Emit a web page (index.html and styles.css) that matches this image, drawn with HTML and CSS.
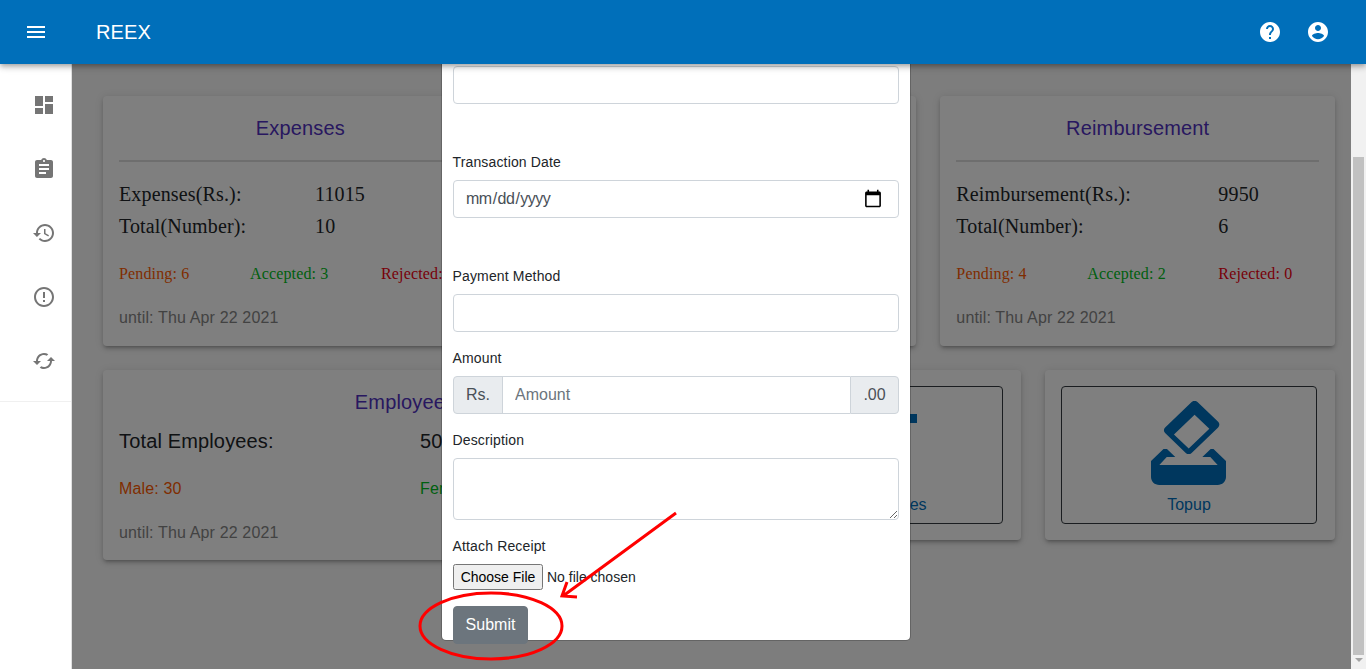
FILE: index.html
```html
<!DOCTYPE html>
<html lang="en">
  <head>
    <meta charset="UTF-8" />
    <meta name="viewport" content="width=device-width, initial-scale=1.0" />
    <title>REEX</title>
    <link rel="stylesheet" href="styles.css">
  </head>
  <body>
    <div class="app">
      <header class="topbar">
        <svg class="icon menu-icon" viewBox="0 0 24 24"><path d="M3 18h18v-2H3v2zm0-5h18v-2H3v2zm0-7v2h18V6H3z"/></svg>
        <div class="brand">REEX</div>
        <svg class="icon help-icon" viewBox="0 0 24 24"><path d="M12 2C6.48 2 2 6.48 2 12s4.48 10 10 10 10-4.48 10-10S17.52 2 12 2zm1 17h-2v-2h2v2zm2.07-7.75l-.9.92C13.45 12.9 13 13.5 13 15h-2v-.5c0-1.1.45-2.1 1.17-2.83l1.24-1.26c.37-.36.59-.86.59-1.41 0-1.1-.9-2-2-2s-2 .9-2 2H8c0-2.21 1.79-4 4-4s4 1.79 4 4c0 .88-.36 1.68-.93 2.25z"/></svg>
        <svg class="icon" viewBox="0 0 24 24"><path d="M12 2C6.48 2 2 6.48 2 12s4.48 10 10 10 10-4.48 10-10S17.52 2 12 2zm0 3c1.66 0 3 1.34 3 3s-1.34 3-3 3-3-1.34-3-3 1.34-3 3-3zm0 14.2c-2.5 0-4.71-1.28-6-3.22.03-1.99 4-3.08 6-3.08 1.99 0 5.97 1.09 6 3.08-1.29 1.94-3.5 3.22-6 3.22z"/></svg>
      </header>

      <div class="body-row">
        <nav class="sidebar">
          <div class="nav-list">
            <div class="nav-item"><svg class="icon" viewBox="0 0 24 24"><path d="M3 13h8V3H3v10zm0 8h8v-6H3v6zm10 0h8V11h-8v10zm0-18v6h8V3h-8z"/></svg></div>
            <div class="nav-item"><svg class="icon" viewBox="0 0 24 24"><path d="M19 3h-4.18C14.4 1.84 13.3 1 12 1c-1.3 0-2.4.84-2.82 2H5c-1.1 0-2 .9-2 2v14c0 1.1.9 2 2 2h14c1.1 0 2-.9 2-2V5c0-1.1-.9-2-2-2zm-7 0c.55 0 1 .45 1 1s-.45 1-1 1-1-.45-1-1 .45-1 1-1zm2 14H7v-2h7v2zm3-4H7v-2h10v2zm0-4H7V7h10v2z"/></svg></div>
            <div class="nav-item"><svg class="icon" viewBox="0 0 24 24"><path d="M13 3c-4.97 0-9 4.03-9 9H1l3.89 3.89.07.14L9 12H6c0-3.87 3.13-7 7-7s7 3.13 7 7-3.13 7-7 7c-1.93 0-3.68-.79-4.94-2.06l-1.42 1.42C8.27 19.99 10.51 21 13 21c4.97 0 9-4.03 9-9s-4.03-9-9-9zm-1 5v5l4.28 2.54.72-1.21-3.5-2.08V8H12z"/></svg></div>
            <div class="nav-item"><svg class="icon" viewBox="0 0 24 24"><path d="M11 15h2v2h-2zm0-8h2v6h-2zm.99-5C6.47 2 2 6.48 2 12s4.47 10 9.99 10C17.52 22 22 17.52 22 12S17.52 2 11.99 2zM12 20c-4.42 0-8-3.58-8-8s3.58-8 8-8 8 3.58 8 8-3.58 8-8 8z"/></svg></div>
            <div class="nav-item"><svg class="icon" viewBox="0 0 24 24"><path d="M19 8l-4 4h3c0 3.31-2.69 6-6 6-1.01 0-1.97-.25-2.8-.7l-1.46 1.46C8.97 19.54 10.43 20 12 20c4.42 0 8-3.58 8-8h3l-4-4zM6 12c0-3.31 2.69-6 6-6 1.01 0 1.97.25 2.8.7l1.46-1.46C15.03 4.46 13.57 4 12 4c-4.42 0-8 3.58-8 8H1l4 4 4-4H6z"/></svg></div>
          </div>
        </nav>

        <main class="content">
          <div class="card-row">
            <section class="card stat-card">
              <h2 class="card-title">Expenses</h2>
              <hr class="card-rule" />
              <div class="stat-line col-short"><span>Expenses(Rs.):</span><span>11015</span></div>
              <div class="stat-line col-short"><span>Total(Number):</span><span>10</span></div>
              <div class="status-line">
                <span class="pending">Pending: 6</span>
                <span class="accepted">Accepted: 3</span>
                <span class="rejected">Rejected: 1</span>
              </div>
              <p class="until">until: Thu Apr 22 2021</p>
            </section>
            <section class="card stat-card"></section>
            <section class="card stat-card">
              <h2 class="card-title">Reimbursement</h2>
              <hr class="card-rule" />
              <div class="stat-line col-long"><span>Reimbursement(Rs.):</span><span>9950</span></div>
              <div class="stat-line col-long"><span>Total(Number):</span><span>6</span></div>
              <div class="status-line">
                <span class="pending">Pending: 4</span>
                <span class="accepted">Accepted: 2</span>
                <span class="rejected">Rejected: 0</span>
              </div>
              <p class="until">until: Thu Apr 22 2021</p>
            </section>
          </div>

          <div class="card-row lower-row">
            <section class="card employee-card">
              <h2 class="card-title">Employees</h2>
              <div class="employee-line"><span>Total Employees:</span><span>50</span></div>
              <div class="gender-line"><span class="pending">Male: 30</span><span class="accepted">Female: 20</span></div>
              <p class="until">until: Thu Apr 22 2021</p>
            </section>
            <section class="card tile-card">
              <div class="tile">
                <svg class="tile-icon" viewBox="0 0 84 84"><rect x="77" y="13" width="7" height="9"/></svg>
                <span class="tile-label">Add Expenses</span>
              </div>
            </section>
            <section class="card tile-card">
              <div class="tile">
                <svg class="tile-icon topup-icon" viewBox="3 1 18 21" preserveAspectRatio="none"><path d="M18 13h-.68l-2 2h1.91L19 17H5l1.78-2h2.05l-2-2H6l-3 3v4c0 1.1.89 2 1.99 2H19c1.1 0 2-.89 2-2v-4l-3-3zm-1-5.05l-4.95 4.95-3.54-3.54 4.95-4.95L17 7.95zm-4.24-6.71L6.39 7.61c-.39.39-.39 1.02 0 1.41l4.95 4.95c.39.39 1.02.39 1.41 0l6.36-6.36c.39-.39.39-1.02 0-1.41L14.16 1.24c-.38-.39-1.01-.39-1.4 0z"/></svg>
                <span class="tile-label">Topup</span>
              </div>
            </section>
          </div>
          <div class="backdrop"></div>
        </main>

        <div class="scrollbar">
          <div class="scroll-thumb"></div>
          <div class="scroll-arrow"></div>
        </div>
      </div>

      <form class="modal">
        <input class="field" type="text" />
        <div class="group wide-gap">
          <label for="txDate">Transaction Date</label>
          <input class="field date-field" type="date" id="txDate" />
        </div>
        <div class="group wide-gap">
          <label for="payMethod">Payment Method</label>
          <input class="field" type="text" id="payMethod" />
        </div>
        <div class="group">
          <label for="amount">Amount</label>
          <div class="input-group">
            <span class="addon addon-left">Rs.</span>
            <input class="field field-mid" type="text" id="amount" placeholder="Amount" />
            <span class="addon addon-right">.00</span>
          </div>
        </div>
        <div class="group">
          <label for="description">Description</label>
          <textarea class="field field-area" id="description"></textarea>
        </div>
        <div class="group">
          <label for="receipt">Attach Receipt</label>
          <input class="file-input" type="file" id="receipt" />
        </div>
        <button class="submit-btn" type="button">Submit</button>
      </form>

      <!-- red marks drawn on top of the screenshot -->
      <svg class="annotation" viewBox="0 0 1366 669">
        <ellipse cx="491" cy="626" rx="71" ry="33" />
        <path d="M676 513 L563 596 M567 582 L562 596 L577 597" />
      </svg>
    </div>
  </body>
</html>
```

FILE: styles.css
```css
* {
  box-sizing: border-box;
}

html,
body {
  margin: 0;
  height: 100%;
  overflow: hidden;
}

body {
  font-family: "Liberation Sans", Arial, sans-serif;
  letter-spacing: 0.15px;
  color: #212529;
}

.app {
  position: relative;
  display: flex;
  flex-direction: column;
  width: 1366px;
  height: 669px;
  overflow: hidden;
  background: #fff;
}

.icon {
  display: block;
  width: 24px;
  height: 24px;
  fill: currentColor;
  flex: none;
}

/* top bar */
.topbar {
  position: relative;
  z-index: 5;
  display: flex;
  align-items: center;
  flex: none;
  height: 64px;
  padding: 0 36px 0 24px;
  background: #006fba;
  color: #fff;
  box-shadow: 0 2px 4px -1px rgba(0, 0, 0, 0.2), 0 4px 5px rgba(0, 0, 0, 0.14), 0 1px 10px rgba(0, 0, 0, 0.12);
}

.brand {
  margin-left: 48px;
  font-size: 20px;
  line-height: 24px;
  flex: 1;
}

.help-icon {
  margin-right: 24px;
}

/* left nav */
.body-row {
  display: flex;
  flex: 1;
  min-height: 0;
}

.sidebar {
  flex: none;
  width: 72px;
  background: #fff;
  border-right: 1px solid rgba(0, 0, 0, 0.12);
}

.nav-list {
  padding: 9px 0 8px;
  border-bottom: 1px solid rgba(0, 0, 0, 0.06);
}

.nav-item {
  display: flex;
  align-items: center;
  height: 64px;
  padding-left: 32px;
  color: #757575;
}

/* page under the dialog */
.content {
  position: relative;
  flex: 1;
  padding: 32px 16px 0 31px;
  background: #fafafa;
}

.backdrop {
  position: absolute;
  inset: 0;
  background: rgba(0, 0, 0, 0.5);
}

.card-row {
  display: flex;
  gap: 24px;
  align-items: flex-start;
}

.lower-row {
  margin-top: 24px;
}

.card {
  background: #fff;
  border-radius: 4px;
  padding: 16px;
  box-shadow: 0 3px 3px -2px rgba(0, 0, 0, 0.2), 0 3px 4px rgba(0, 0, 0, 0.14), 0 1px 8px rgba(0, 0, 0, 0.12);
}

.stat-card {
  flex: 1;
  height: 250px;
}

.card-title {
  margin: 0;
  font-size: 20px;
  font-weight: 400;
  line-height: 32px;
  text-align: center;
  color: #5030c0;
}

.card-rule {
  margin: 16px 0 16px;
  border: 0;
  border-top: 2px solid #dcdcdc;
}

.stat-line {
  display: grid;
  font-family: "Liberation Serif", "Times New Roman", serif;
  font-size: 20px;
  line-height: 32px;
}

.col-short {
  grid-template-columns: 196px 1fr;
}

.col-long {
  grid-template-columns: 262px 1fr;
}

.status-line {
  display: grid;
  grid-template-columns: 131px 131px 1fr;
  margin-top: 20px;
  font-family: "Liberation Serif", "Times New Roman", serif;
  font-size: 16px;
  line-height: 24px;
  white-space: nowrap;
}

.pending {
  color: #ff5a00;
}

.accepted {
  color: #00c020;
}

.rejected {
  color: #f00010;
}

.until {
  margin: 20px 0 0;
  font-size: 16px;
  line-height: 24px;
  color: #858585;
}

.employee-card {
  flex: none;
  width: 604px;
  height: 190px;
}

.employee-line {
  display: grid;
  grid-template-columns: 301px 1fr;
  margin-top: 7px;
  font-size: 20px;
  line-height: 32px;
}

.gender-line {
  display: grid;
  grid-template-columns: 301px 1fr;
  margin-top: 20px;
  font-size: 16px;
  line-height: 24px;
}

.tile-card {
  flex: none;
  width: 290px;
  height: 170px;
  padding-right: 18px;
}

.tile {
  display: flex;
  flex-direction: column;
  align-items: center;
  height: 138px;
  padding-top: 14px;
  border: 1px solid #343a40;
  border-radius: 4px;
  color: #006fbc;
}

.tile-icon {
  display: block;
  width: 84px;
  height: 84px;
  fill: currentColor;
}

.topup-icon {
  width: 75px;
  margin-right: 1px;
}

.tile-label {
  margin-top: 8px;
  font-size: 16px;
  line-height: 24px;
  letter-spacing: 0;
}

/* scrollbar strip */
.scrollbar {
  position: relative;
  z-index: 1;
  flex: none;
  width: 15px;
  background: #f1f1f1;
  padding: 93px 2px 0;
}

.scroll-thumb {
  height: 498px;
  background: #c1c1c1;
}

.scroll-arrow {
  width: 0;
  height: 0;
  margin: 3px auto 0;
  border-left: 4px solid transparent;
  border-right: 4px solid transparent;
  border-top: 4px solid #a3a3a3;
}

/* dialog */
.modal {
  position: absolute;
  z-index: 3;
  left: 441px;
  top: 20px;
  width: 470px;
  height: 621px;
  padding: 45px 11px 0;
  background: #fff;
  border: 1px solid rgba(0, 0, 0, 0.2);
  border-radius: 5px;
  background-clip: padding-box;
}

.group {
  margin-top: 15px;
}

.wide-gap {
  margin-top: 47px;
}

.group label {
  display: block;
  padding-top: 1px;
  margin-bottom: 7px;
  margin-left: -0.5px;
  font-size: 14px;
  line-height: 21px;
}

.field {
  display: block;
  width: 100%;
  height: 38px;
  padding: 6px 12px;
  font-family: inherit;
  font-size: 16px;
  line-height: 24px;
  letter-spacing: 0;
  color: #495057;
  background: #fff;
  border: 1px solid #ced4da;
  border-radius: 4px;
}

.field::placeholder {
  color: #6c757d;
}

.date-field {
  padding-left: 11px;
  letter-spacing: -0.5px;
}

.date-field::-webkit-calendar-picker-indicator {
  width: 20px;
  height: 20px;
  margin-right: 3px;
  padding: 0;
}

.field-area {
  height: 62px;
}

.input-group {
  display: flex;
}

.field-mid {
  flex: 1;
  min-width: 0;
  border-right: 0;
  border-radius: 0;
  margin-left: -1px;
}

.addon {
  flex: none;
  width: 50px;
  height: 38px;
  font-size: 16px;
  line-height: 36px;
  letter-spacing: 0;
  text-align: center;
  color: #495057;
  background: #e9ecef;
  border: 1px solid #ced4da;
}

.addon-left {
  border-radius: 4px 0 0 4px;
}

.addon-right {
  width: 49px;
  border-radius: 0 4px 4px 0;
}

.file-input {
  display: block;
  width: 100%;
  height: 26px;
  font-family: inherit;
  font-size: 14px;
  letter-spacing: 0;
}

.file-input::file-selector-button {
  width: 90px;
  height: 26px;
  margin-right: 4px;
  padding: 0;
}

.submit-btn {
  display: block;
  margin-top: 16px;
  width: 75px;
  height: 38px;
  padding: 0;
  font-family: inherit;
  font-size: 16px;
  letter-spacing: 0;
  color: #fff;
  background: #6c757d;
  border: 1px solid #6c757d;
  border-radius: 4px;
}

/* hand-drawn marks */
.annotation {
  position: absolute;
  z-index: 6;
  left: 0;
  top: 0;
  width: 1366px;
  height: 669px;
  pointer-events: none;
  fill: none;
  stroke: #f00;
  stroke-width: 3;
}
```
